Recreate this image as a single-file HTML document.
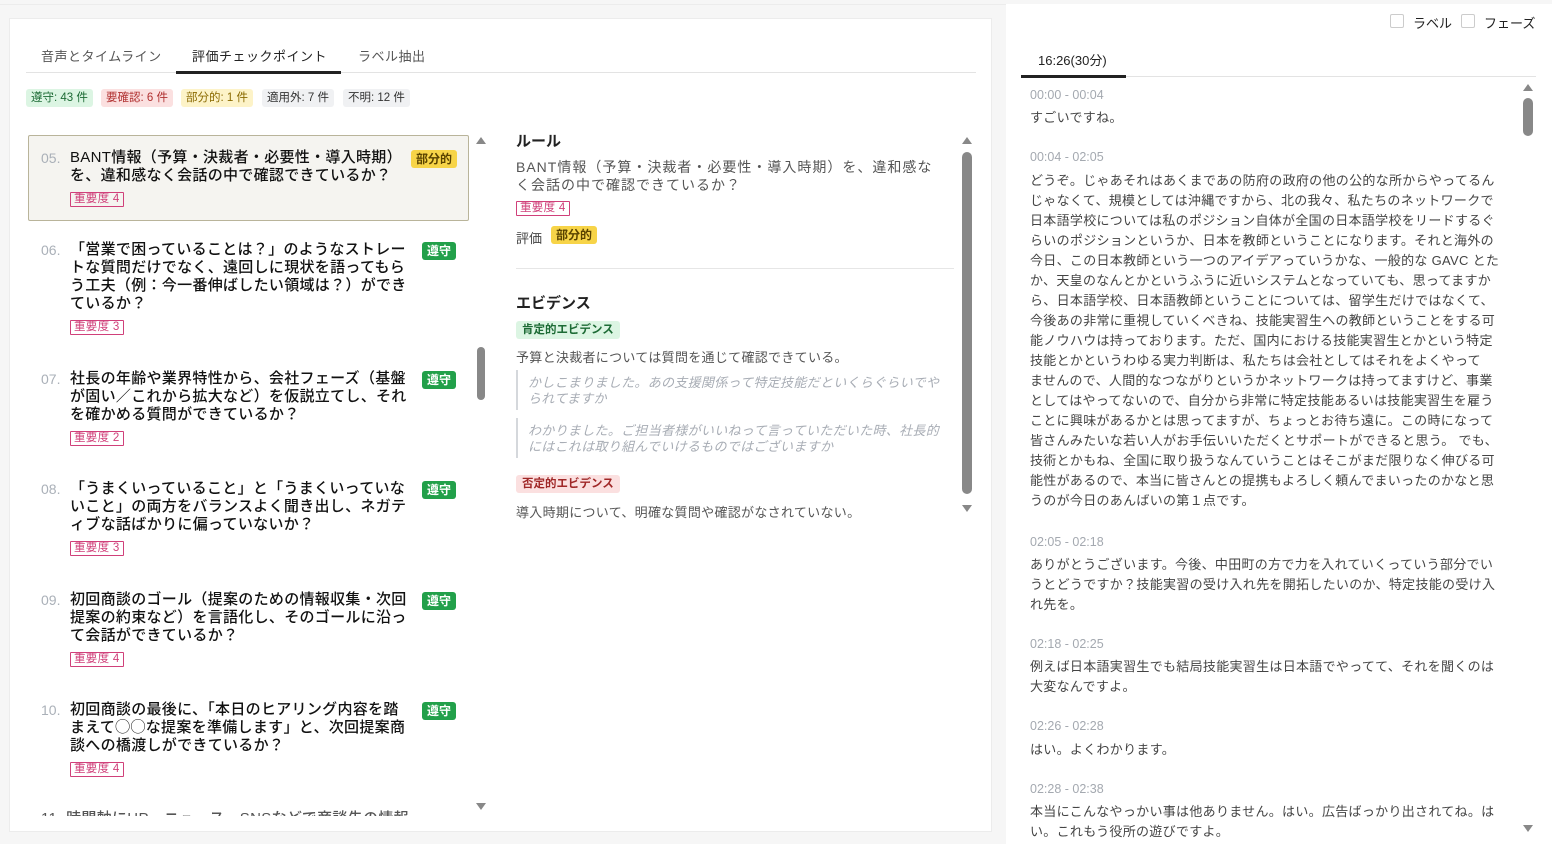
<!DOCTYPE html>
<html><head><meta charset="utf-8"><style>
*{margin:0;padding:0;box-sizing:border-box}
body{width:1552px;height:844px;overflow:hidden;background:#f6f6f6;font-family:"Liberation Sans","Noto Sans CJK JP",sans-serif;color:#222;position:relative}
.a{position:absolute;white-space:nowrap}
.card{position:absolute;left:9px;top:18px;width:983px;height:814px;background:#fff;border:1px solid #ececec}
.right{position:absolute;left:1006px;top:4px;width:546px;height:840px;background:#fff}
.tab{font-size:13px;color:#555;letter-spacing:.5px}
.cnt{font-size:11.5px;padding:2px 5px;border-radius:3px;height:18px;line-height:14px}
.it{font-size:15px;line-height:18px;letter-spacing:.3px;color:#111;font-weight:500}
.num{font-size:14px;color:#aab0b8;line-height:18px}
.imp{font-size:11.5px;color:#d0407a;border:1px solid #d0407a;padding:0 3px;height:15px;line-height:13px;border-radius:1px;letter-spacing:.3px}
.ok{font-size:12px;color:#fff;background:#22a04a;padding:0 5px;height:18px;line-height:18px;border-radius:3px;font-weight:bold}
.part{font-size:12px;color:#5a4300;background:#f7d448;padding:0 5px;height:18px;line-height:18px;border-radius:3px;font-weight:bold}
.tri-up{width:0;height:0;border-left:5px solid transparent;border-right:5px solid transparent;border-bottom:7px solid #888}
.tri-dn{width:0;height:0;border-left:5px solid transparent;border-right:5px solid transparent;border-top:7px solid #888}
.ts{font-size:12.5px;color:#a4a9b0}
.tx{font-size:13px;line-height:20px;color:#444;letter-spacing:.3px}
.ev{font-size:13px;line-height:16px;color:#a8adb5;font-style:italic;letter-spacing:.3px}
</style></head><body>
<div class="card"></div>
<div class="a" style="left:0;top:4px;width:1006px;height:1px;background:#ececec"></div>
<div class="a tab" style="left:41px;top:46px">音声とタイムライン</div>
<div class="a tab" style="left:192px;top:46px;color:#222">評価チェックポイント</div>
<div class="a tab" style="left:358px;top:46px">ラベル抽出</div>
<div class="a" style="left:26px;top:72px;width:950px;height:1px;background:#e3e3e3"></div>
<div class="a" style="left:176px;top:71px;width:165px;height:3px;background:#222"></div>
<div class="a cnt" style="left:26px;top:89px;background:#dcf5e3;color:#1d6b35">遵守: 43 件</div>
<div class="a cnt" style="left:101px;top:89px;background:#fbe0e0;color:#b03030">要確認: 6 件</div>
<div class="a cnt" style="left:181px;top:89px;background:#fdf3c8;color:#8a6a00">部分的: 1 件</div>
<div class="a cnt" style="left:262px;top:89px;background:#f0f1f3;color:#333">適用外: 7 件</div>
<div class="a cnt" style="left:343px;top:89px;background:#f0f1f3;color:#333">不明: 12 件</div>

<div class="a" style="left:28px;top:135px;width:441px;height:86px;background:#f5f4f0;border:1px solid #b9b49a;border-radius:2px"></div>
<div class="a num" style="left:41px;top:149px">05.</div>
<div class="a it" style="left:70px;top:149px">BANT情報（予算・決裁者・必要性・導入時期）<br>を、違和感なく会話の中で確認できているか？</div>
<div class="a part" style="left:411px;top:150px">部分的</div>
<div class="a imp" style="left:70px;top:192px">重要度 4</div>

<div class="a num" style="left:41px;top:241px">06.</div>
<div class="a it" style="left:70px;top:241px">「営業で困っていることは？」のようなストレー<br>トな質問だけでなく、遠回しに現状を語ってもら<br>う工夫（例：今一番伸ばしたい領域は？）ができ<br>ているか？</div>
<div class="a ok" style="left:422px;top:242px">遵守</div>
<div class="a imp" style="left:70px;top:320px">重要度 3</div>

<div class="a num" style="left:41px;top:370px">07.</div>
<div class="a it" style="left:70px;top:370px">社長の年齢や業界特性から、会社フェーズ（基盤<br>が固い／これから拡大など）を仮説立てし、それ<br>を確かめる質問ができているか？</div>
<div class="a ok" style="left:422px;top:371px">遵守</div>
<div class="a imp" style="left:70px;top:431px">重要度 2</div>

<div class="a num" style="left:41px;top:480px">08.</div>
<div class="a it" style="left:70px;top:480px">「うまくいっていること」と「うまくいっていな<br>いこと」の両方をバランスよく聞き出し、ネガテ<br>ィブな話ばかりに偏っていないか？</div>
<div class="a ok" style="left:422px;top:481px">遵守</div>
<div class="a imp" style="left:70px;top:541px">重要度 3</div>

<div class="a num" style="left:41px;top:591px">09.</div>
<div class="a it" style="left:70px;top:591px">初回商談のゴール（提案のための情報収集・次回<br>提案の約束など）を言語化し、そのゴールに沿っ<br>て会話ができているか？</div>
<div class="a ok" style="left:422px;top:592px">遵守</div>
<div class="a imp" style="left:70px;top:652px">重要度 4</div>

<div class="a num" style="left:41px;top:701px">10.</div>
<div class="a it" style="left:70px;top:701px">初回商談の最後に、「本日のヒアリング内容を踏<br>まえて◯◯な提案を準備します」と、次回提案商<br>談への橋渡しができているか？</div>
<div class="a ok" style="left:422px;top:702px">遵守</div>
<div class="a imp" style="left:70px;top:762px">重要度 4</div>
<div class="a" style="left:20px;top:808px;width:450px;height:8px;overflow:hidden"><div class="it" style="position:absolute;left:21px;top:2px;color:#555">11. 時間軸にHP、ニュース、SNSなどで商談先の情報</div></div>

<div class="a tri-up" style="left:476px;top:137px"></div>
<div class="a" style="left:477px;top:347px;width:8px;height:53px;background:#888;border-radius:4px"></div>
<div class="a tri-dn" style="left:476px;top:803px"></div>

<div class="a" style="left:516px;top:130px;font-size:15px;font-weight:bold">ルール</div>
<div class="a" style="left:516px;top:158px;font-size:14px;line-height:18px;color:#555;letter-spacing:1px">BANT情報（予算・決裁者・必要性・導入時期）を、違和感な<br>く会話の中で確認できているか？</div>
<div class="a imp" style="left:516px;top:201px">重要度 4</div>
<div class="a" style="left:516px;top:228px;font-size:13px;color:#444">評価</div>
<div class="a part" style="left:551px;top:226px">部分的</div>
<div class="a" style="left:516px;top:268px;width:438px;height:1px;background:#e6e6e6"></div>
<div class="a" style="left:516px;top:292px;font-size:15px;font-weight:bold">エビデンス</div>
<div class="a" style="left:516px;top:321px;font-size:11.5px;background:#dcf5e3;color:#1d6b35;padding:0 6px;height:18px;line-height:18px;border-radius:3px;font-weight:bold">肯定的エビデンス</div>
<div class="a" style="left:516px;top:347px;font-size:13px;color:#555;letter-spacing:.3px">予算と決裁者については質問を通じて確認できている。</div>
<div class="a" style="left:516px;top:370px;width:2px;height:40px;background:#d5d8dc"></div>
<div class="a ev" style="left:528px;top:375px">かしこまりました。あの支援関係って特定技能だといくらぐらいでや<br>られてますか</div>
<div class="a" style="left:516px;top:418px;width:2px;height:40px;background:#d5d8dc"></div>
<div class="a ev" style="left:528px;top:423px">わかりました。ご担当者様がいいねって言っていただいた時、社長的<br>にはこれは取り組んでいけるものではございますか</div>
<div class="a" style="left:516px;top:475px;font-size:11.5px;background:#fbe0e0;color:#a02828;padding:0 6px;height:18px;line-height:18px;border-radius:3px;font-weight:bold">否定的エビデンス</div>
<div class="a" style="left:516px;top:502px;font-size:13px;color:#555;letter-spacing:.3px">導入時期について、明確な質問や確認がなされていない。</div>
<div class="a tri-up" style="left:962px;top:137px"></div>
<div class="a" style="left:962px;top:152px;width:10px;height:342px;background:#888;border-radius:5px"></div>
<div class="a tri-dn" style="left:962px;top:505px"></div>

<div class="right"></div>
<div class="a" style="left:1390px;top:14px;width:14px;height:14px;border:1px solid #ccc;border-radius:2px"></div>
<div class="a" style="left:1413px;top:13px;font-size:13px">ラベル</div>
<div class="a" style="left:1461px;top:14px;width:14px;height:14px;border:1px solid #ccc;border-radius:2px"></div>
<div class="a" style="left:1484px;top:13px;font-size:13px">フェーズ</div>
<div class="a" style="left:1038px;top:50px;font-size:13px;color:#222">16:26(30分)</div>
<div class="a" style="left:1021px;top:76px;width:515px;height:1px;background:#e3e3e3"></div>
<div class="a" style="left:1021px;top:75px;width:105px;height:3px;background:#222"></div>
<div class="a tri-up" style="left:1523px;top:84px"></div>
<div class="a" style="left:1523px;top:98px;width:10px;height:38px;background:#888;border-radius:5px"></div>
<div class="a tri-dn" style="left:1523px;top:825px"></div>

<div class="a ts" style="left:1030px;top:88px">00:00 - 00:04</div>
<div class="a tx" style="left:1030px;top:108px">すごいですね。</div>
<div class="a ts" style="left:1030px;top:150px">00:04 - 02:05</div>
<div class="a tx" style="left:1030px;top:171px">どうぞ。じゃあそれはあくまであの防府の政府の他の公的な所からやってるん<br>じゃなくて、規模としては沖縄ですから、北の我々、私たちのネットワークで<br>日本語学校については私のポジション自体が全国の日本語学校をリードするぐ<br>らいのポジションというか、日本を教師ということになります。それと海外の<br>今日、この日本教師という一つのアイデアっていうかな、一般的な GAVC とた<br>か、天皇のなんとかというふうに近いシステムとなっていても、思ってますか<br>ら、日本語学校、日本語教師ということについては、留学生だけではなくて、<br>今後あの非常に重視していくべきね、技能実習生への教師ということをする可<br>能ノウハウは持っております。ただ、国内における技能実習生とかという特定<br>技能とかというわゆる実力判断は、私たちは会社としてはそれをよくやって<br>ませんので、人間的なつながりというかネットワークは持ってますけど、事業<br>としてはやってないので、自分から非常に特定技能あるいは技能実習生を雇う<br>ことに興味があるかとは思ってますが、ちょっとお待ち遠に。この時になって<br>皆さんみたいな若い人がお手伝いいただくとサポートができると思う。 でも、<br>技術とかもね、全国に取り扱うなんていうことはそこがまだ限りなく伸びる可<br>能性があるので、本当に皆さんとの提携もよろしく頼んでまいったのかなと思<br>うのが今日のあんばいの第１点です。</div>
<div class="a ts" style="left:1030px;top:535px">02:05 - 02:18</div>
<div class="a tx" style="left:1030px;top:555px">ありがとうございます。今後、中田町の方で力を入れていくっていう部分でい<br>うとどうですか？技能実習の受け入れ先を開拓したいのか、特定技能の受け入<br>れ先を。</div>
<div class="a ts" style="left:1030px;top:637px">02:18 - 02:25</div>
<div class="a tx" style="left:1030px;top:657px">例えば日本語実習生でも結局技能実習生は日本語でやってて、それを聞くのは<br>大変なんですよ。</div>
<div class="a ts" style="left:1030px;top:719px">02:26 - 02:28</div>
<div class="a tx" style="left:1030px;top:740px">はい。よくわかります。</div>
<div class="a ts" style="left:1030px;top:782px">02:28 - 02:38</div>
<div class="a tx" style="left:1030px;top:802px">本当にこんなやっかい事は他ありません。はい。広告ばっかり出されてね。は<br>い。これもう役所の遊びですよ。</div>
</body></html>
